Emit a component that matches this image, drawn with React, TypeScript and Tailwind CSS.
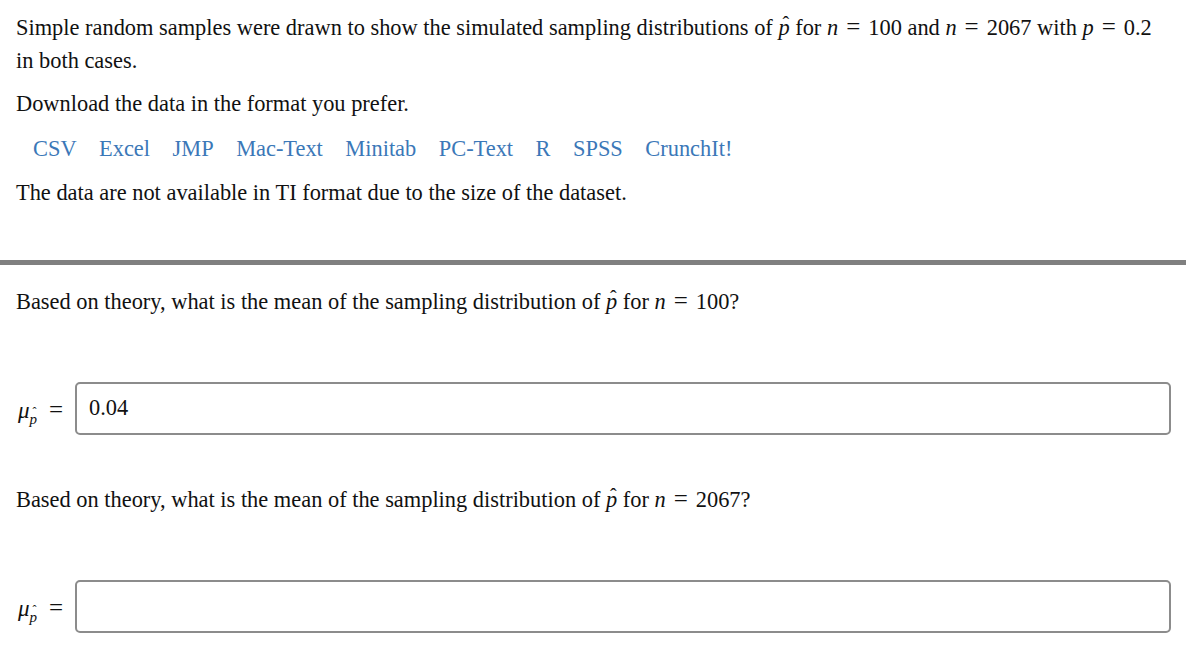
import React from "react";

const serif = { fontFamily: '"Liberation Serif", "Times New Roman", serif' };

function PHat({ small = false }: { small?: boolean }) {
  return (
    <span className="relative inline-block italic">
      p
      <span
        className={
          small
            ? "absolute left-[3px] top-[-6px] not-italic text-[12px] leading-none"
            : "absolute left-[4px] top-[3px] not-italic text-[20px] leading-none"
        }
      >
        ˆ
      </span>
    </span>
  );
}

function Eq() {
  return <span className="mx-[8px] inline-block text-[25px] leading-none">=</span>;
}

function MuLabel() {
  return (
    <span className="whitespace-nowrap text-[23px] leading-[33px] text-[#111]">
      <span className="italic">μ</span>
      <span className="relative top-[6px] text-[15px] leading-none">
        <PHat small />
      </span>
      <span className="ml-[12px] inline-block text-[25px] leading-none">=</span>
    </span>
  );
}

function AnswerRow({ value }: { value: string }) {
  return (
    <div className="flex items-center">
      <div className="w-[59px] shrink-0 pl-[2px] pt-[4px]">
        <MuLabel />
      </div>
      <div className="h-[53px] flex-1 rounded-[5px] border-2 border-[#8c8c8c] bg-white pl-[12px] flex items-center pb-[2px]">
        <span className="text-[22.4px] text-[#111]">{value}</span>
      </div>
    </div>
  );
}

export default function App() {
  const links = ["CSV", "Excel", "JMP", "Mac-Text", "Minitab", "PC-Text", "R", "SPSS", "CrunchIt!"];
  return (
    <div style={serif} className="min-h-[650px] w-[1186px] bg-white text-[22.4px] leading-[33px] text-[#111]">
      <div className="px-[16px] pt-[11px]">
        <p>
          Simple random samples were drawn to show the simulated sampling distributions of <PHat /> for{" "}
          <span className="italic">n</span>
          <Eq />
          100 and <span className="italic">n</span>
          <Eq />
          2067 with <span className="italic">p</span>
          <Eq />
          0.2
          <br />
          in both cases.
        </p>
        <p className="mt-[10px]">Download the data in the format you prefer.</p>
        <div className="mt-[12px] ml-[17px] flex gap-[22.5px] text-[#3b78b8]">
          {links.map((l) => (
            <a key={l} href="#" className="no-underline">
              {l}
            </a>
          ))}
        </div>
        <p className="mt-[11px]">The data are not available in TI format due to the size of the dataset.</p>
      </div>
      <div className="mt-[51px] h-[5px] w-full bg-[#808080]" />
      <div className="pl-[16px] pr-[15px] pt-[20px]">
        <p>
          Based on theory, what is the mean of the sampling distribution of <PHat /> for{" "}
          <span className="italic">n</span>
          <Eq />
          100?
        </p>
        <div className="mt-[64px]">
          <AnswerRow value="0.04" />
        </div>
        <p className="mt-[48px]">
          Based on theory, what is the mean of the sampling distribution of <PHat /> for{" "}
          <span className="italic">n</span>
          <Eq />
          2067?
        </p>
        <div className="mt-[64px]">
          <AnswerRow value="" />
        </div>
      </div>
    </div>
  );
}
